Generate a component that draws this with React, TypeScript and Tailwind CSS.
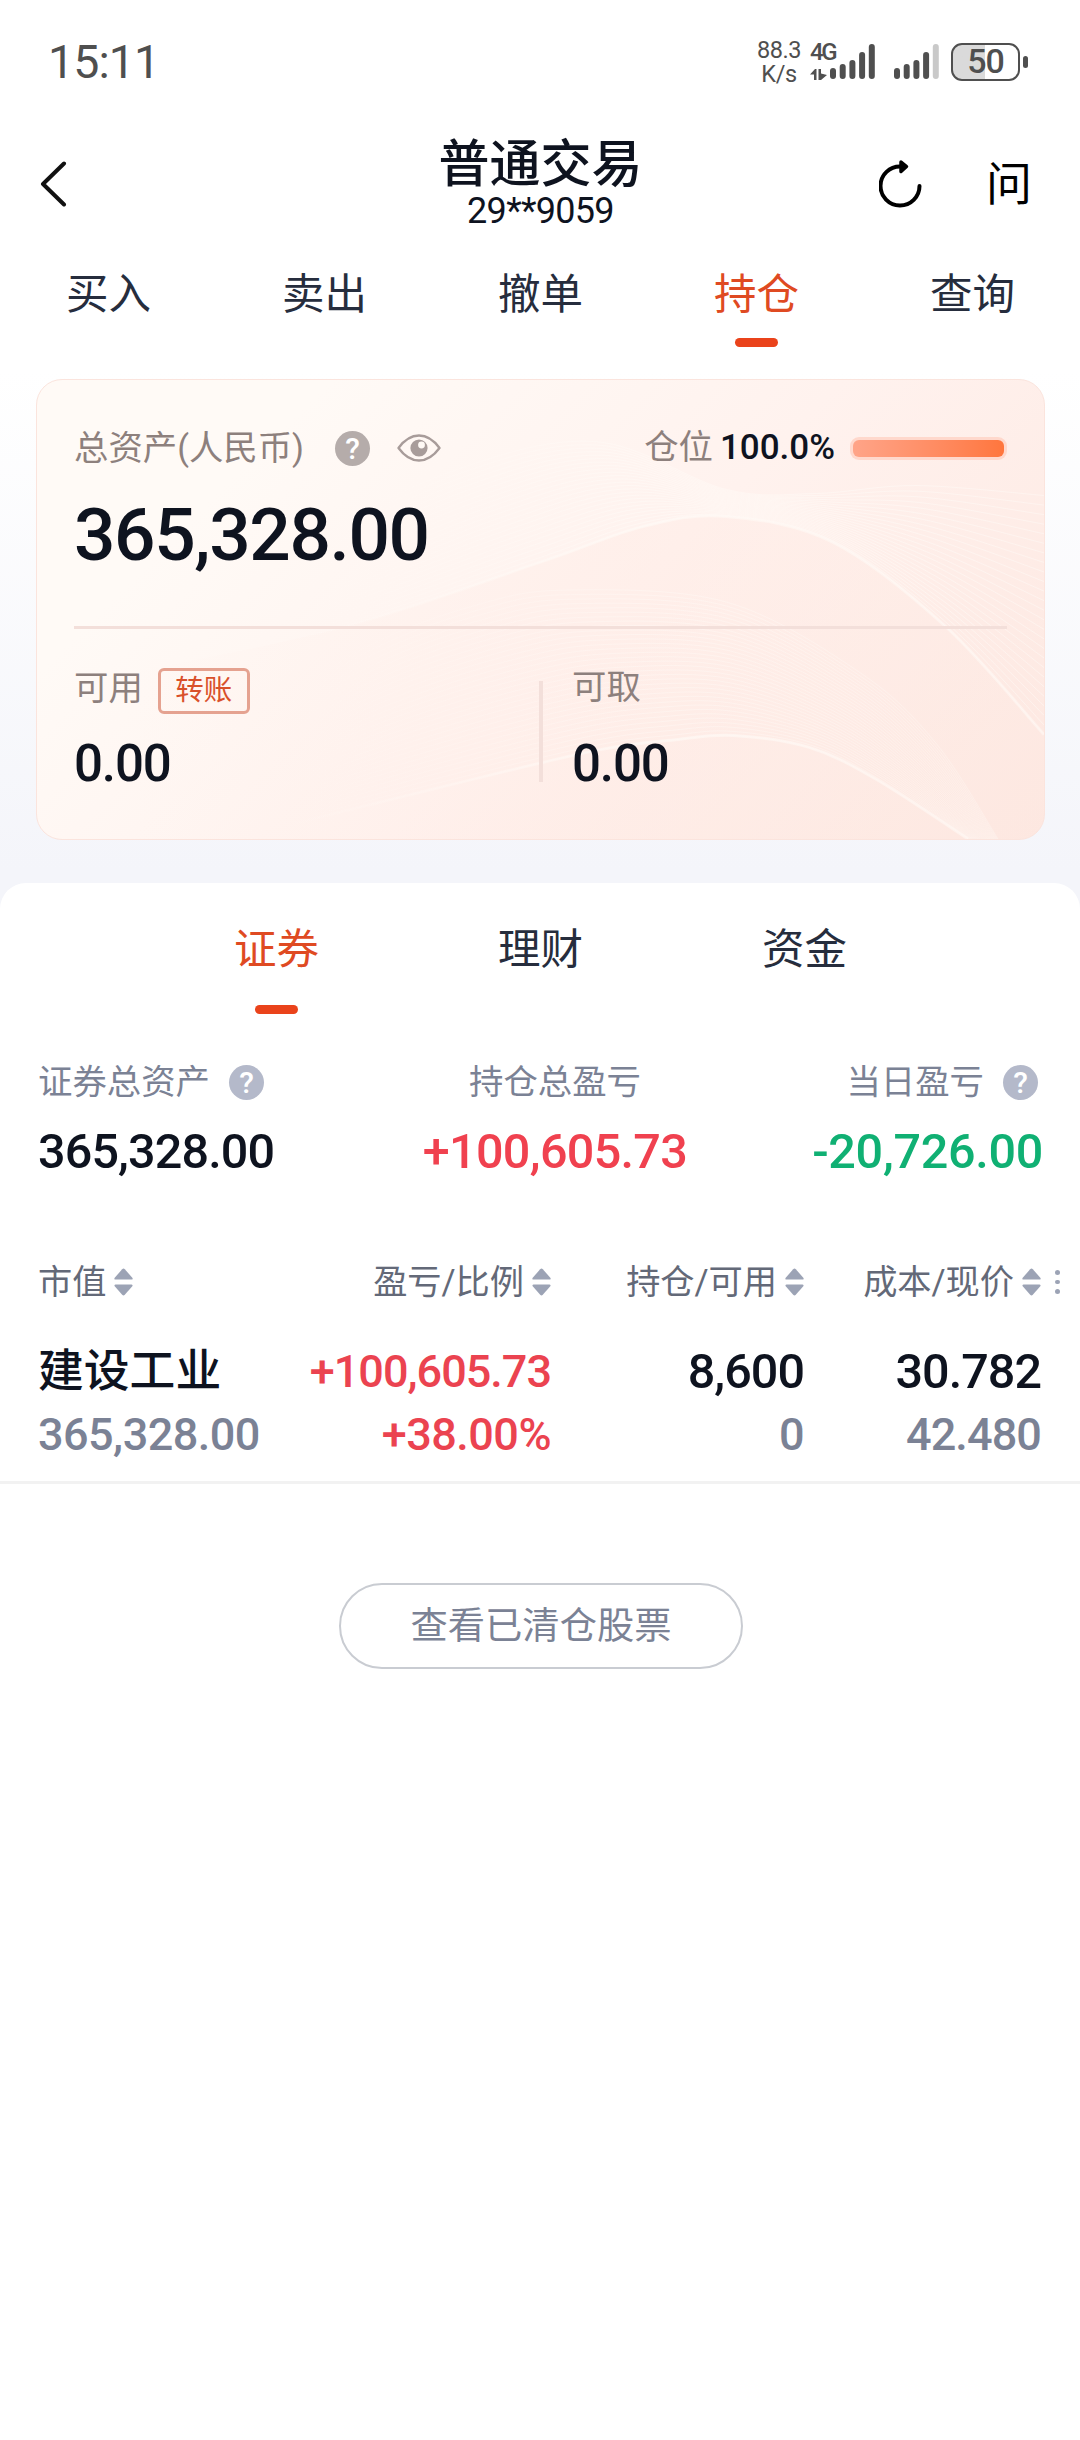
import React, { useState } from "react";
import clsx from "clsx";

const mainTabs = ["买入", "卖出", "撤单", "持仓", "查询"];
const assetTabs = ["证券", "理财", "资金"];

const columns = ["市值", "盈亏/比例", "持仓/可用", "成本/现价"];

const positions = [
	{
		name: "建设工业",
		marketValue: "365,328.00",
		profit: "+100,605.73",
		ratio: "+38.00%",
		holding: "8,600",
		available: "0",
		cost: "30.782",
		price: "42.480",
	},
];

type Point = [number, number];

// crests of the decorative waves, in card coordinates
const waveTop: Point[] = [
	[60, 270],
	[250, 170],
	[420, 90],
	[560, 62],
	[690, 110],
	[780, 114],
	[880, 106],
	[1008, 116],
];
const waveMain: Point[] = [
	[60, 300],
	[300, 250],
	[504, 183],
	[607, 147],
	[690, 137],
	[797, 163],
	[910, 248],
	[1008, 356],
];
const waveMiddle: Point[] = [
	[200, 350],
	[330, 268],
	[440, 226],
	[531, 211],
	[690, 223],
	[824, 294],
	[900, 365],
	[962, 461],
];
const waveBottom: Point[] = [
	[200, 460],
	[400, 410],
	[560, 372],
	[642, 361],
	[697, 357],
	[773, 369],
	[840, 401],
	[932, 461],
];

const toPath = (points: Point[]) => {
	let d = `M${points[0][0]} ${points[0][1]}`;
	for (let i = 0; i < points.length - 1; i++) {
		const p0 = points[i - 1] ?? points[i];
		const p1 = points[i];
		const p2 = points[i + 1];
		const p3 = points[i + 2] ?? p2;
		d += ` C${p1[0] + (p2[0] - p0[0]) / 6} ${p1[1] + (p2[1] - p0[1]) / 6}`;
		d += ` ${p2[0] - (p3[0] - p1[0]) / 6} ${p2[1] - (p3[1] - p1[1]) / 6}`;
		d += ` ${p2[0]} ${p2[1]}`;
	}
	return d;
};

const between = (a: Point[], b: Point[], count: number) =>
	Array.from({ length: count }, (_, i) => {
		const t = i / (count - 1);
		return toPath(
			a.map(([x, y], j): Point => [
				x + (b[j][0] - x) * t,
				y + (b[j][1] - y) * t,
			])
		);
	});

const CardWaves = () => (
	<svg
		className="absolute inset-0 size-full"
		viewBox="0 0 1008 461"
		preserveAspectRatio="none"
		fill="none"
	>
		<defs>
			<linearGradient id="waveLine" x1="100" x2="1008" y1="0" y2="0" gradientUnits="userSpaceOnUse">
				<stop offset="0.15" stopColor="#fffaf6" stopOpacity="0" />
				<stop offset="0.55" stopColor="#fffaf6" stopOpacity="0.6" />
				<stop offset="1" stopColor="#fffaf6" stopOpacity="0.5" />
			</linearGradient>
			<linearGradient id="waveFill" x1="100" x2="1008" y1="0" y2="0" gradientUnits="userSpaceOnUse">
				<stop offset="0" stopColor="#ffe9e2" stopOpacity="0" />
				<stop offset="0.55" stopColor="#ffe9e2" stopOpacity="0.35" />
				<stop offset="1" stopColor="#ffe9e2" stopOpacity="0.2" />
			</linearGradient>
		</defs>
		<path d={`${toPath(waveMain)} V461 H60 Z`} fill="url(#waveFill)" />
		{between(waveTop, waveMain, 26).map((d, i) => (
			<path key={i} d={d} stroke="url(#waveLine)" strokeWidth="1" />
		))}
		{between(waveMiddle, waveBottom, 34).map((d, i) => (
			<path key={i} d={d} stroke="url(#waveLine)" strokeWidth="1" opacity="0.7" />
		))}
		<path d={toPath(waveMain)} stroke="url(#waveLine)" strokeWidth="3" />
		<path d={toPath(waveBottom)} stroke="url(#waveLine)" strokeWidth="3" />
	</svg>
);

const HelpIcon = ({ className }: { className?: string }) => (
	<span
		className={clsx(
			"flex size-[35px] items-center justify-center rounded-full text-[30px] leading-[35px] font-medium text-white",
			className
		)}
	>
		?
	</span>
);

const EyeIcon = () => (
	<svg width="44" height="28" viewBox="0 0 44 28" fill="none">
		<path
			d="M1.5 14C7 6.500 14 1.500 22 1.500S37 6.500 42.500 14C37 21.500 30 26.500 22 26.500S7 21.500 1.500 14Z"
			stroke="#a89c9a"
			strokeWidth="2.400"
			strokeLinejoin="round"
		/>
		<circle cx="22" cy="14" r="8.600" fill="#a89c9a" />
		<circle cx="24.500" cy="11" r="3.400" fill="#fff9f5" />
	</svg>
);

const SortIcon = () => (
	<svg width="19" height="28" viewBox="0 0 19 28" fill="#9ca3b5">
		<path d="M8.200 1.200Q9.500 0 10.800 1.200L18.500 10Q19 11.500 17.500 11.500H1.500Q0 11.500 0.500 10Z" />
		<path d="M8.200 26.800Q9.500 28 10.800 26.800L18.500 18Q19 16.500 17.500 16.500H1.500Q0 16.500 0.500 18Z" />
	</svg>
);

const SignalIcon = ({ weak }: { weak?: boolean }) => (
	<svg width="45" height="36" viewBox="0 0 45 36">
		{[24, 20, 16, 8, 0].map((top, i) => (
			<rect
				key={top}
				x={i * 9.7}
				y={top}
				width="6"
				height={35 - top}
				rx="3"
				fill={weak && i === 4 ? "#c9c9c9" : "#4f4f4f"}
			/>
		))}
	</svg>
);

const StatusBar = () => (
	<div className="flex h-[123px] items-center justify-between pr-[52px] pl-[48px] text-[#4f4f4f]">
		<div className="text-[46.500px] leading-[48px] tracking-[-0.900px]">15:11</div>
		<div className="flex items-center">
			<div className="w-[46px] text-center text-[23.500px] leading-[24px] tracking-[-0.400px]">
				<div>88.3</div>
				<div>K/s</div>
			</div>
			<div className="relative ml-[8px] h-[36px] w-[65px]">
				<div className="absolute -top-[4px] left-0 text-[24px] leading-[25px] font-medium tracking-[-2.500px]">
					4G
				</div>
				<svg className="absolute top-[25px] left-0" width="17" height="11" viewBox="0 0 17 11" fill="#4f4f4f">
					<path d="M0 5.500 5 0H6.500V11H4V5.500ZM8.500 0H11V4.500L17 6 11 11H8.500Z" />
				</svg>
				<div className="absolute top-0 left-[20px]">
					<SignalIcon />
				</div>
			</div>
			<div className="ml-[19px] h-[36px]">
				<SignalIcon weak />
			</div>
			<div className="ml-[12px] flex items-center gap-[3px]">
				<div className="flex h-[38px] w-[69px] items-center justify-center rounded-[11px] border-[2.500px] border-[#4f4f4f] bg-linear-to-r from-[#dadada] from-50% to-white to-50% text-[34px] leading-[33px] font-medium tracking-[-1px]">
					50
				</div>
				<div className="h-[12px] w-[5px] rounded-full bg-[#4f4f4f]" />
			</div>
		</div>
	</div>
);

const Header = () => (
	<div className="flex h-[117px] items-start justify-between pr-[48px] pl-[40px]">
		<div className="flex w-[162px] pt-[38px]">
			<svg width="27" height="46" viewBox="0 0 27 46" fill="none">
				<path d="M24 2.500 3 23 24 43.500" stroke="#111" strokeWidth="4" strokeLinecap="round" strokeLinejoin="round" />
			</svg>
		</div>
		<div className="flex flex-col items-center pt-[16px] text-[#0e131f]">
			<div className="text-[51px] leading-[52px] font-medium">普通交易</div>
			<div className="text-[36px] leading-[40px] tracking-[-0.700px]">29**9059</div>
		</div>
		<div className="flex w-[153px] items-center justify-between pt-[36px]">
			<svg width="44" height="50" viewBox="0 0 44 50" fill="none">
				<path d="M40.500 27A19.500 19.500 0 1 1 21.500 7.500H26" stroke="#000" strokeWidth="4" strokeLinecap="round" />
				<path d="M22 3 27.500 7.500 22 12.500Z" fill="#000" stroke="#000" strokeWidth="3.500" strokeLinejoin="round" />
			</svg>
			<div className="text-[46px] leading-[50px] text-black">问</div>
		</div>
	</div>
);

const AssetCard = () => (
	<div className="relative mr-[35px] ml-[36px] h-[461px] overflow-hidden rounded-[26px] border-[1.500px] border-[#fbe4dd] bg-linear-[135deg] from-[#fffaf6] from-20% via-[#fff2ee] via-55% to-[#fde7e0]">
		<CardWaves />
		<div className="relative px-[37px] pt-[44px]">
			<div className="flex h-[48px] items-center justify-between">
				<div className="flex items-center text-[34.400px] leading-[48px] text-[#8d807d]">
					<span>总资产(人民币)</span>
					<HelpIcon className="ml-[31px] bg-[#b5acaa]" />
					<span className="ml-[27px]">
						<EyeIcon />
					</span>
				</div>
				<div className="flex items-center">
					<span className="text-[34.400px] text-[#8d807d]">仓位</span>
					<span className="ml-[7px] text-[35px] font-medium text-[#0e131f]">100.0%</span>
					<div className="ml-[15px] w-[157px] rounded-[9px] bg-[#ffd8cc] p-[3px]">
						<div className="h-[17px] rounded-[6px] bg-linear-to-r from-[#ffa488] to-[#ff763d]" />
					</div>
				</div>
			</div>
			<div className="mt-[27px] text-[73px] leading-[72px] font-medium tracking-[-0.019em] text-[#0e131f]">
				365,328.00
			</div>
			<div className="mt-[55px] h-[3px] bg-[#f3dfda]" />
			<div className="flex">
				<div className="w-[465px] pt-[39px]">
					<div className="flex h-[46px] items-center gap-[15px]">
						<span className="pb-[7px] text-[34.400px] leading-[40px] text-[#8d807d]">可用</span>
						<button
							type="button"
							className="h-[46px] w-[92px] rounded-[6px] border-3 border-[#e5a290] text-[28.500px] leading-[40px] text-[#d9502a]"
						>
							转账
						</button>
					</div>
					<div className="mt-[25px] text-[51px] leading-[50px] font-medium tracking-[-0.022em] text-[#0e131f]">0.00</div>
				</div>
				<div className="mt-[52px] h-[101px] w-[4px] bg-[#f3dfda]" />
				<div className="pt-[39px] pl-[29px]">
					<div className="flex h-[46px] items-center pb-[6px] text-[34.400px] text-[#8d807d]">可取</div>
					<div className="mt-[25px] text-[51px] leading-[50px] font-medium tracking-[-0.022em] text-[#0e131f]">0.00</div>
				</div>
			</div>
		</div>
	</div>
);

const Summary = () => (
	<div className="mt-[50px] flex pr-[37px] pl-[38px] text-[34.400px] leading-[36px] text-[#7b8295]">
		<div className="w-[340px]">
			<div className="flex h-[36px] items-center gap-[19px]">
				证券总资产
				<HelpIcon className="bg-[#b4b9ca]" />
			</div>
			<div className="mt-[28px] text-[48.500px] leading-[48px] font-medium tracking-[-0.018em] text-[#0e131f]">365,328.00</div>
		</div>
		<div className="w-[354px] text-center">
			<div>持仓总盈亏</div>
			<div className="mt-[28px] text-[48.500px] leading-[48px] font-medium tracking-[-0.014em] text-[#f0414f]">+100,605.73</div>
		</div>
		<div className="flex flex-1 flex-col items-end">
			<div className="mr-[5px] flex h-[36px] items-center gap-[19px]">
				当日盈亏
				<HelpIcon className="bg-[#b4b9ca]" />
			</div>
			<div className="mt-[28px] text-[48.500px] leading-[48px] font-medium tracking-[-0.006em] text-[#10b073]">-20,726.00</div>
		</div>
	</div>
);

const PositionTable = () => (
	<div>
		<div className="mt-[88px] flex h-[36px] items-center pl-[38px] text-[34.200px] leading-[36px] text-[#636978]">
			<div className="grid grid-cols-[230px_283px_253px_237px]">
				{columns.map((column, i) => (
					<div
						key={column}
						className={clsx("flex items-center gap-[8px]", i > 0 && "justify-end")}
					>
						{column}
						<SortIcon />
					</div>
				))}
			</div>
			<div className="ml-[14px] flex flex-col gap-[5px]">
				<span className="size-[4.500px] rounded-full bg-[#9ca3b5]" />
				<span className="size-[4.500px] rounded-full bg-[#9ca3b5]" />
				<span className="size-[4.500px] rounded-full bg-[#9ca3b5]" />
			</div>
		</div>
		{positions.map((item) => (
			<div key={item.name} className="border-b-3 border-[#f2f2f2] pt-[48px] pb-[26px] pl-[38px] font-medium">
				<div className="grid h-[48px] grid-cols-[230px_283px_253px_237px] text-right text-[48.500px] leading-[48px] tracking-[-0.020em] text-[#0e131f]">
					<div className="text-left text-[45.800px] tracking-normal">{item.name}</div>
					<div className="text-[45px] tracking-[-0.022em] text-[#eb4350]">{item.profit}</div>
					<div>{item.holding}</div>
					<div>{item.cost}</div>
				</div>
				<div className="mt-[19px] grid h-[40px] grid-cols-[230px_283px_253px_237px] text-right text-[45px] leading-[40px] tracking-[-0.012em] text-[#7b8295]">
					<div className="text-left">{item.marketValue}</div>
					<div className="text-[#eb4350]">{item.ratio}</div>
					<div>{item.available}</div>
					<div className="tracking-[-0.020em]">{item.price}</div>
				</div>
			</div>
		))}
	</div>
);

const App = () => {
	const [mainTab, setMainTab] = useState("持仓");
	const [assetTab, setAssetTab] = useState("证券");

	return (
		<div className="flex h-[2440px] w-[1080px] flex-col overflow-hidden bg-[linear-gradient(#ffffff_370px,#f4f5fa_870px)] font-[Roboto,'Noto_Sans_CJK_SC',sans-serif]">
			<StatusBar />
			<Header />
			<div className="grid h-[139px] grid-cols-5">
				{mainTabs.map((tab) => (
					<button
						key={tab}
						type="button"
						onClick={() => setMainTab(tab)}
						className="flex flex-col items-center pt-[31px] pl-px"
					>
						<span
							className={clsx(
								"text-[42.500px] leading-[48px]",
								tab === mainTab ? "text-[#df4a22]" : "text-[#262d3d]"
							)}
						>
							{tab}
						</span>
						{tab === mainTab && (
							<span className="mt-[19px] h-[9px] w-[43px] rounded-full bg-[#ea431b]" />
						)}
					</button>
				))}
			</div>
			<AssetCard />
			<div className="mt-[43px] flex-1 rounded-t-[26px] bg-white">
				<div className="grid h-[131px] grid-cols-3 px-[144px]">
					{assetTabs.map((tab) => (
						<button
							key={tab}
							type="button"
							onClick={() => setAssetTab(tab)}
							className="flex flex-col items-center pt-[43px] pl-px"
						>
							<span
								className={clsx(
									"text-[42.500px] leading-[48px]",
									tab === assetTab ? "text-[#df4a22]" : "text-[#262d3d]"
								)}
							>
								{tab}
							</span>
							{tab === assetTab && (
								<span className="mt-[31px] h-[9px] w-[43px] rounded-full bg-[#ea431b]" />
							)}
						</button>
					))}
				</div>
				<Summary />
				<PositionTable />
				<div className="mt-[99px] flex justify-center pl-[2px]">
					<button
						type="button"
						className="h-[86px] w-[404px] rounded-full border-2 border-[#c9ccd2] text-[37.300px] leading-[48px] text-[#7b8295]"
					>
						查看已清仓股票
					</button>
				</div>
			</div>
		</div>
	);
};

export default App;
